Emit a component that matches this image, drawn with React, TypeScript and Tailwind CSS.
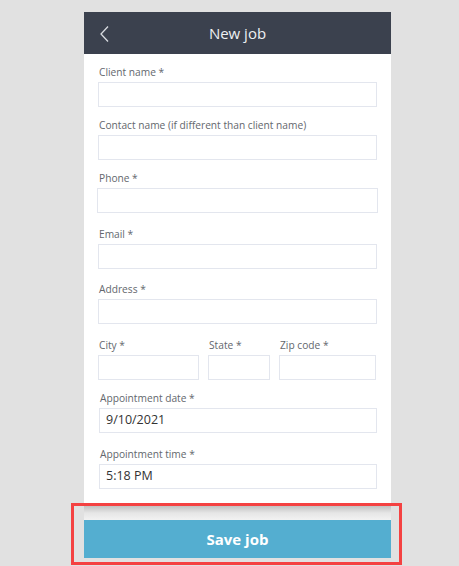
import React from "react";

const font = { fontFamily: '"Open Sans", "Noto Sans", sans-serif' };

function Field({
    label,
    value,
    className = "",
    inputClass = "",
}: {
    label: string;
    value?: string;
    className?: string;
    inputClass?: string;
}) {
    return (
        <div className={"flex flex-col " + className}>
            <label className="h-[14px] text-[10.2px] leading-[14px] text-[#63676d] pl-px">
                {label}
            </label>
            <div
                className={
                    "mt-[3px] h-[25px] border border-[#e3e6ee] bg-white flex items-center px-[6px] text-[12.5px] text-[#333] " +
                    inputClass
                }
            >
                {value}
            </div>
        </div>
    );
}

export default function App() {
    return (
        <div className="relative w-[459px] h-[566px] bg-[#e1e1e1] overflow-hidden" style={font}>
            <div className="ml-[84px] pt-[12px] w-[307px] flex flex-col">
                <div className="h-[42px] bg-[#3b414e] flex items-center relative">
                    <svg
                        className="absolute left-[15px] top-[13px]"
                        width="12"
                        height="18"
                        viewBox="0 0 12 18"
                        fill="none"
                    >
                        <path d="M9 1.5 L2 9 L9 16.5" stroke="#d8dbe0" strokeWidth="1.3" />
                    </svg>
                    <div className="w-full text-center text-[15px] text-[#eef0f2]">New job</div>
                </div>

                <div className="bg-white px-[14px] pt-[11px] pb-[17px] flex flex-col">
                    <Field label="Client name *" />
                    <Field label="Contact name (if different than client name)" className="mt-[11px]" />
                    <Field label="Phone *" className="mt-[11px]" inputClass="-mx-px" />
                    <Field label="Email *" className="mt-[14px]" />
                    <Field label="Address *" className="mt-[13px]" />
                    <div className="mt-[14px] flex gap-[9px]">
                        <Field label="City *" className="w-[101px]" />
                        <Field label="State *" className="w-[62px]" />
                        <Field label="Zip code *" className="flex-1 mr-px" />
                    </div>
                    <Field label="Appointment date *" value="9/10/2021" className="mt-[11px] ml-px" />
                    <Field label="Appointment time *" value="5:18 PM" className="mt-[14px] ml-px" />
                </div>

                <div className="h-[14px] bg-gradient-to-b from-[#c2c2c2] via-[#e6e6e6] to-[#f2f2f2]" />
                <button className="h-[38px] bg-[#54aed0] text-white text-[15px] font-bold">
                    Save job
                </button>
            </div>

            <div className="absolute left-[71px] top-[503px] w-[331px] h-[62px] border-[3px] border-[#f44242]" />
        </div>
    );
}
